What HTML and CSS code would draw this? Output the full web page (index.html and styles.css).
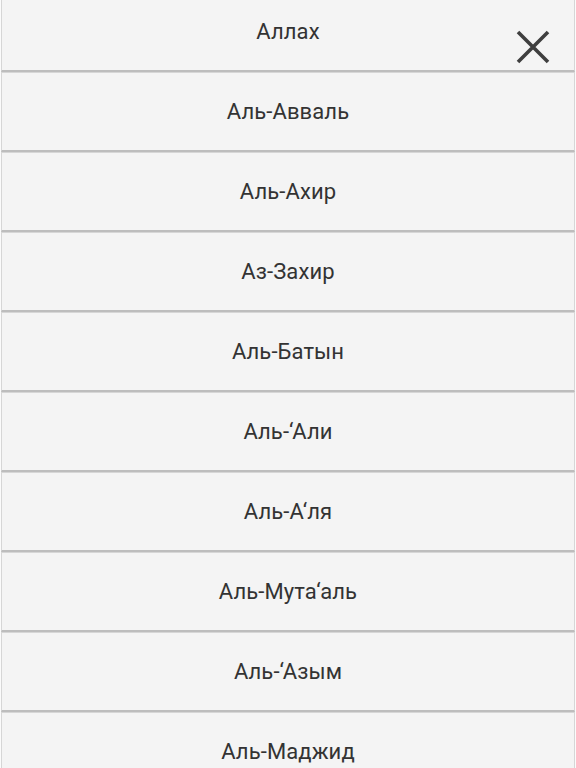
FILE: index.html
```html
<!DOCTYPE html>
<html lang="ru">
<head>
<meta charset="utf-8">
<link rel="stylesheet" href="styles.css">
</head>
<body>
<div class="screen">
  <ul class="names">
    <li class="name">Аллах</li>
    <li class="name">Аль-Авваль</li>
    <li class="name">Аль-Ахир</li>
    <li class="name">Аз-Захир</li>
    <li class="name">Аль-Батын</li>
    <li class="name">Аль-‘Али</li>
    <li class="name">Аль-А‘ля</li>
    <li class="name">Аль-Мута‘аль</li>
    <li class="name">Аль-‘Азым</li>
    <li class="name">Аль-Маджид</li>
  </ul>
  <button class="close" aria-label="Закрыть">
    <svg width="34" height="34" viewBox="0 0 34 34"><path d="M2 2 L32 32 M32 2 L2 32" stroke="#3f3f3f" stroke-width="3.6" fill="none"/></svg>
  </button>
</div>
</body>
</html>
```
FILE: styles.css
```css
html, body {
  margin: 0;
  padding: 0;
  background: #f4f4f4;
  overflow: hidden;
}
.screen {
  position: relative;
  width: 576px;
  height: 768px;
  overflow: hidden;
  background: #fbfbfb;
}
.names {
  list-style: none;
  margin: -8px 0 0;
  padding: 0;
  display: flex;
  flex-direction: column;
}
.name {
  height: 80px;
  box-sizing: border-box;
  margin: 0 1px;
  background: #f4f4f4;
  border: 1px solid #d6d6d6;
  border-bottom: 2px solid #bdbdbd;
  display: flex;
  align-items: center;
  justify-content: center;
  font-family: Roboto, "Noto Sans", sans-serif;
  font-size: 22px;
  letter-spacing: 0.1px;
  color: #333;
}
.close {
  position: absolute;
  top: 30px;
  right: 26px;
  width: 34px;
  height: 34px;
  padding: 0;
  border: 0;
  background: transparent;
  display: flex;
}
```
